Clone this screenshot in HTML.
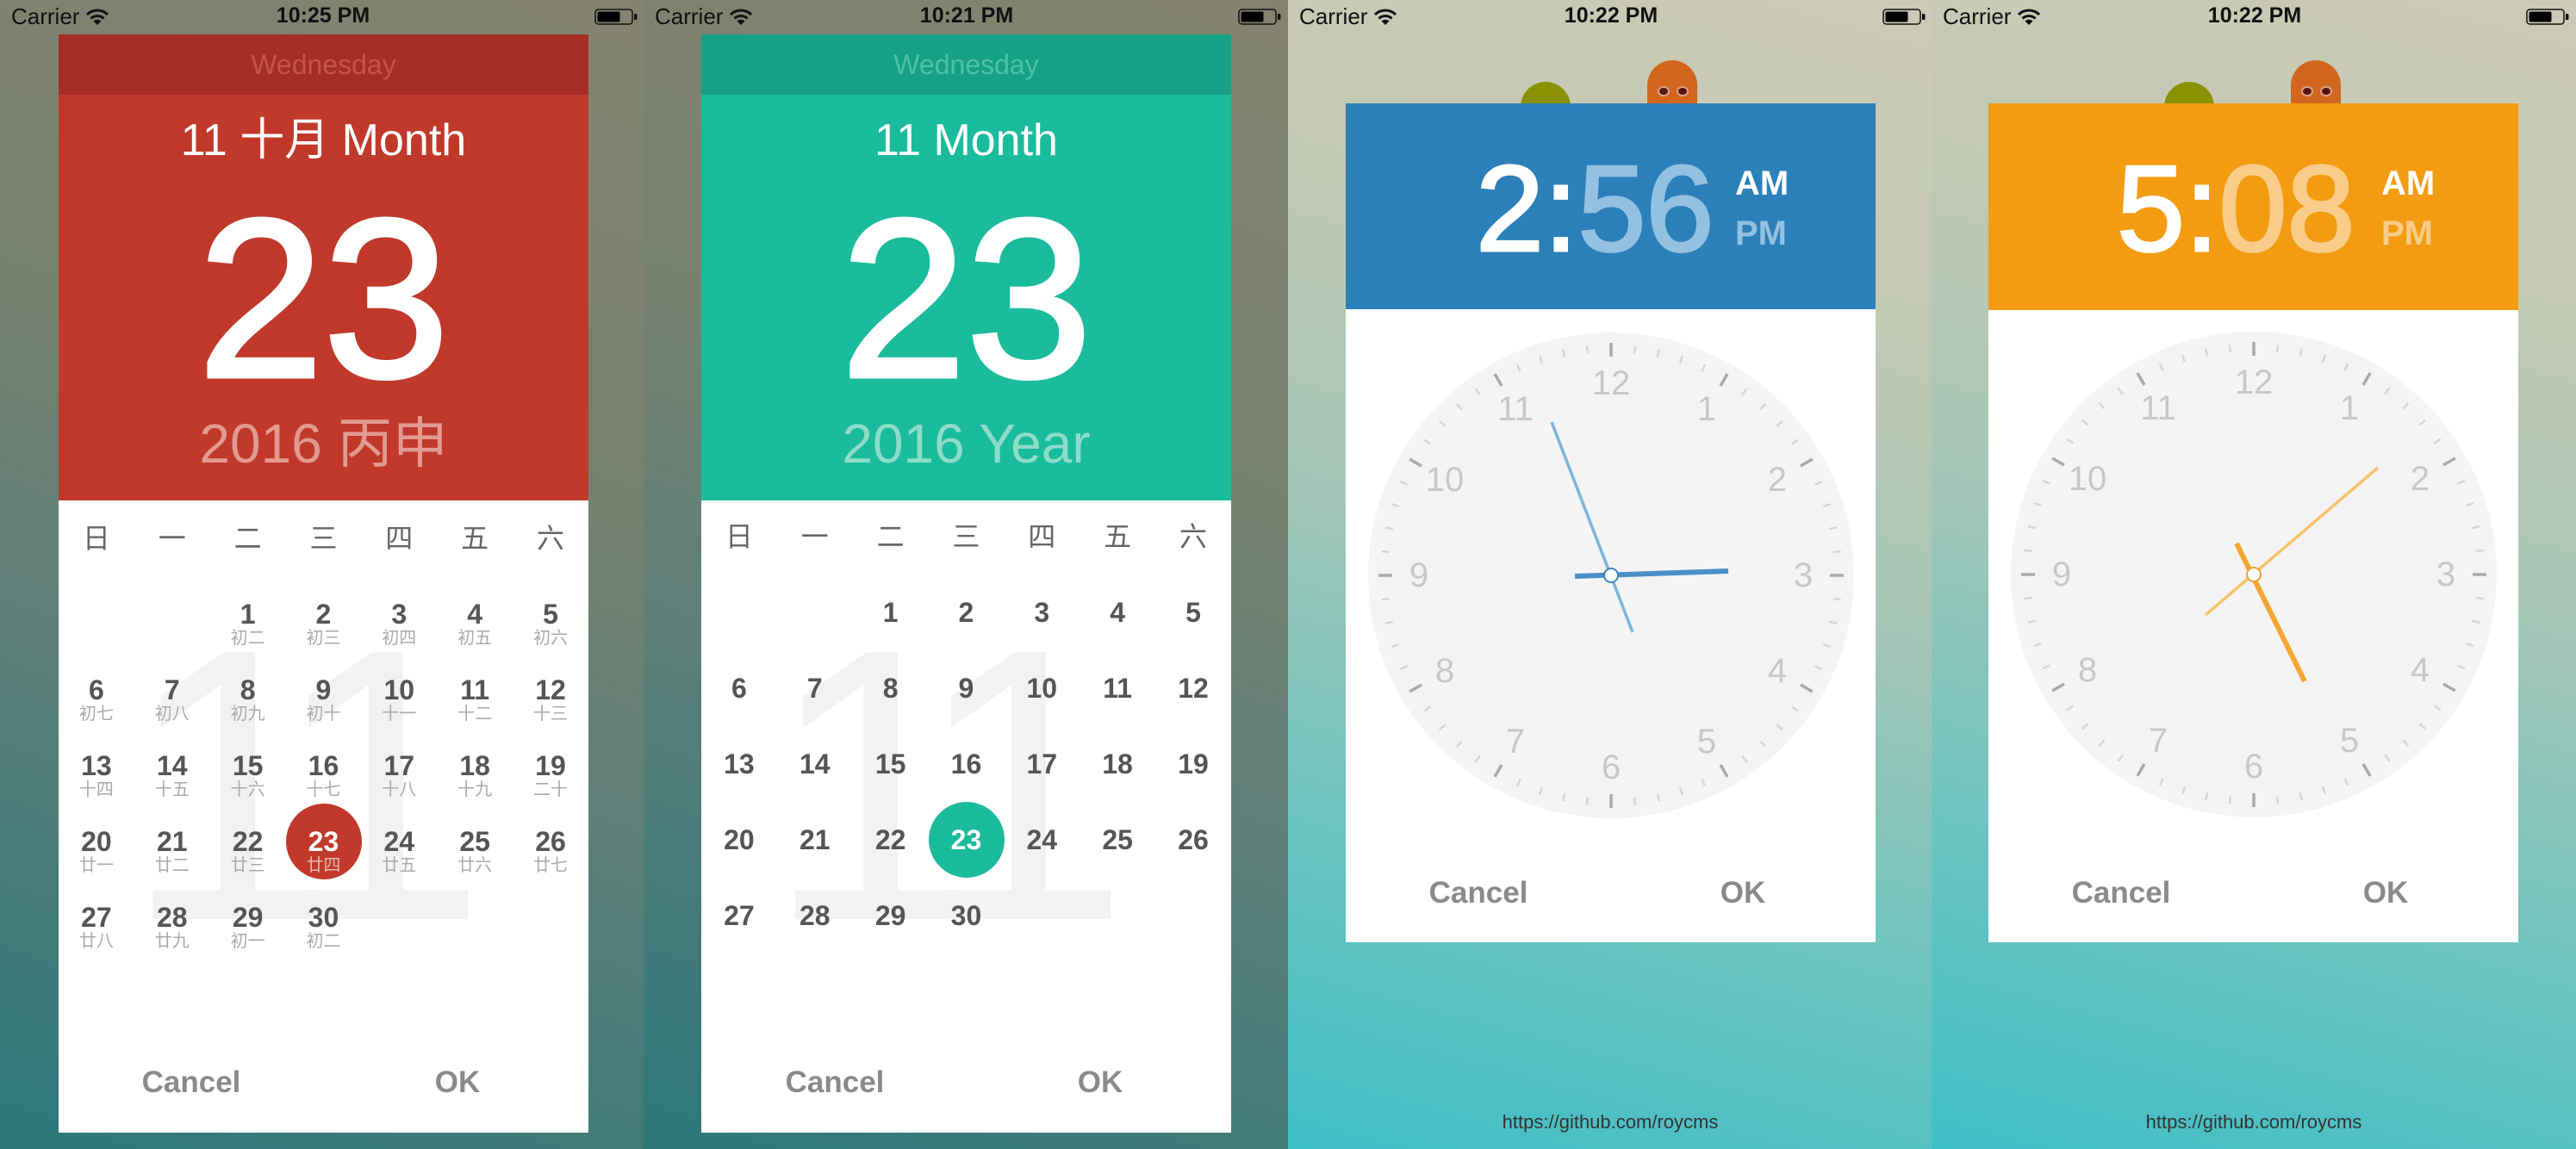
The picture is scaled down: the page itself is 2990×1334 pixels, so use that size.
<!DOCTYPE html>
<html><head><meta charset="utf-8">
<style>
*{margin:0;padding:0;box-sizing:border-box}
body{width:2990px;height:1334px;overflow:hidden;position:relative;font-family:"Liberation Sans","Noto Sans CJK SC",sans-serif;background:#777}
.p{position:absolute;top:0;width:748px;height:1334px;overflow:hidden}
.p1,.p2{background:linear-gradient(200deg,#84836f 0%,#77826f 35%,#5f7f78 60%,#2c787a 100%)}
.p3,.p4{background:linear-gradient(195deg,#cccab4 0%,#c2c9b3 25%,#a3c6b8 50%,#6cc4c0 75%,#3ebec6 100%)}
.st{position:absolute;top:0;left:0;width:748px;height:40px;font-size:26px;color:#111}
.st .car{position:absolute;left:13px;top:6px;line-height:1}
.st .tm{position:absolute;left:0;width:750px;text-align:center;top:6px;line-height:1;font-weight:bold;font-size:25px}
.st svg{position:absolute}
.card{position:absolute;left:68px;width:615px;background:#fff;overflow:hidden}
.wd{position:absolute;left:0;width:615px;top:0;height:70px;text-align:center;font-size:32px;line-height:70px}
.hd{position:absolute;left:0;width:615px;top:70px;height:471px}
.ab{position:absolute;left:0;width:615px;text-align:center;line-height:1;white-space:nowrap}
.big{-webkit-text-stroke:5px #fff}
.grid{position:absolute;left:0;top:541px;width:615px;display:grid;grid-template-columns:repeat(7,87.857px);grid-auto-rows:88px}
.grid div{position:relative;text-align:center;line-height:88px;font-size:32px;font-weight:bold;color:#555}
.grid div.w{font-weight:normal;font-size:32px;color:#666}
.grid div i{position:absolute;left:0;right:0;top:60px;line-height:24px;font-size:20px;font-style:normal;font-weight:normal;color:#aaa}
.wm{position:absolute;left:75px;top:647px;font-size:450px;line-height:1;color:#f2f2f2;letter-spacing:-45px}
.btn{position:absolute;font-size:35px;font-weight:bold;color:#8a8a8a;line-height:1;width:200px;text-align:center}
.url{position:absolute;left:0;width:748px;text-align:center;font-size:22px;color:#333;top:1290px}
.eye{position:absolute;top:102px;width:10px;height:8px;border-radius:50%;background:#5a1410;box-shadow:0 0 0 2px #d9a58a}
</style></head><body>

<svg width="0" height="0" style="position:absolute">
<defs>
<g id="wifi"><path d="M1 7 A17 17 0 0 1 25 7" fill="none" stroke="#111" stroke-width="3"/><path d="M5.5 11.5 A11 11 0 0 1 20.5 11.5" fill="none" stroke="#111" stroke-width="3"/><path d="M13 19 L8.5 14.5 A6.5 6.5 0 0 1 17.5 14.5 Z" fill="#111"/></g>
<g id="bat"><rect x="1" y="1" width="43" height="17" rx="3.5" fill="none" stroke="#111" stroke-width="1.5"/><rect x="3.5" y="3.5" width="26" height="12" rx="1.5" fill="#000"/><path d="M46 6 h2 a1.5 1.5 0 0 1 1.5 1.5 v4 a1.5 1.5 0 0 1 -1.5 1.5 h-2z" fill="#111"/></g>
<g id="ticks">
<g stroke="#d6d6d6" stroke-width="2.5">
<line x1="0" y1="-268" x2="0" y2="-259" transform="rotate(6)"/><line x1="0" y1="-268" x2="0" y2="-259" transform="rotate(12)"/><line x1="0" y1="-268" x2="0" y2="-259" transform="rotate(18)"/><line x1="0" y1="-268" x2="0" y2="-259" transform="rotate(24)"/>
<line x1="0" y1="-268" x2="0" y2="-259" transform="rotate(36)"/><line x1="0" y1="-268" x2="0" y2="-259" transform="rotate(42)"/><line x1="0" y1="-268" x2="0" y2="-259" transform="rotate(48)"/><line x1="0" y1="-268" x2="0" y2="-259" transform="rotate(54)"/>
<line x1="0" y1="-268" x2="0" y2="-259" transform="rotate(66)"/><line x1="0" y1="-268" x2="0" y2="-259" transform="rotate(72)"/><line x1="0" y1="-268" x2="0" y2="-259" transform="rotate(78)"/><line x1="0" y1="-268" x2="0" y2="-259" transform="rotate(84)"/>
<line x1="0" y1="-268" x2="0" y2="-259" transform="rotate(96)"/><line x1="0" y1="-268" x2="0" y2="-259" transform="rotate(102)"/><line x1="0" y1="-268" x2="0" y2="-259" transform="rotate(108)"/><line x1="0" y1="-268" x2="0" y2="-259" transform="rotate(114)"/>
<line x1="0" y1="-268" x2="0" y2="-259" transform="rotate(126)"/><line x1="0" y1="-268" x2="0" y2="-259" transform="rotate(132)"/><line x1="0" y1="-268" x2="0" y2="-259" transform="rotate(138)"/><line x1="0" y1="-268" x2="0" y2="-259" transform="rotate(144)"/>
<line x1="0" y1="-268" x2="0" y2="-259" transform="rotate(156)"/><line x1="0" y1="-268" x2="0" y2="-259" transform="rotate(162)"/><line x1="0" y1="-268" x2="0" y2="-259" transform="rotate(168)"/><line x1="0" y1="-268" x2="0" y2="-259" transform="rotate(174)"/>
<line x1="0" y1="-268" x2="0" y2="-259" transform="rotate(186)"/><line x1="0" y1="-268" x2="0" y2="-259" transform="rotate(192)"/><line x1="0" y1="-268" x2="0" y2="-259" transform="rotate(198)"/><line x1="0" y1="-268" x2="0" y2="-259" transform="rotate(204)"/>
<line x1="0" y1="-268" x2="0" y2="-259" transform="rotate(216)"/><line x1="0" y1="-268" x2="0" y2="-259" transform="rotate(222)"/><line x1="0" y1="-268" x2="0" y2="-259" transform="rotate(228)"/><line x1="0" y1="-268" x2="0" y2="-259" transform="rotate(234)"/>
<line x1="0" y1="-268" x2="0" y2="-259" transform="rotate(246)"/><line x1="0" y1="-268" x2="0" y2="-259" transform="rotate(252)"/><line x1="0" y1="-268" x2="0" y2="-259" transform="rotate(258)"/><line x1="0" y1="-268" x2="0" y2="-259" transform="rotate(264)"/>
<line x1="0" y1="-268" x2="0" y2="-259" transform="rotate(276)"/><line x1="0" y1="-268" x2="0" y2="-259" transform="rotate(282)"/><line x1="0" y1="-268" x2="0" y2="-259" transform="rotate(288)"/><line x1="0" y1="-268" x2="0" y2="-259" transform="rotate(294)"/>
<line x1="0" y1="-268" x2="0" y2="-259" transform="rotate(306)"/><line x1="0" y1="-268" x2="0" y2="-259" transform="rotate(312)"/><line x1="0" y1="-268" x2="0" y2="-259" transform="rotate(318)"/><line x1="0" y1="-268" x2="0" y2="-259" transform="rotate(324)"/>
<line x1="0" y1="-268" x2="0" y2="-259" transform="rotate(336)"/><line x1="0" y1="-268" x2="0" y2="-259" transform="rotate(342)"/><line x1="0" y1="-268" x2="0" y2="-259" transform="rotate(348)"/><line x1="0" y1="-268" x2="0" y2="-259" transform="rotate(354)"/>
</g>
<g stroke="#aaaaaa" stroke-width="3.5">
<line x1="0" y1="-270" x2="0" y2="-254"/><line x1="0" y1="-270" x2="0" y2="-254" transform="rotate(30)"/><line x1="0" y1="-270" x2="0" y2="-254" transform="rotate(60)"/><line x1="0" y1="-270" x2="0" y2="-254" transform="rotate(90)"/><line x1="0" y1="-270" x2="0" y2="-254" transform="rotate(120)"/><line x1="0" y1="-270" x2="0" y2="-254" transform="rotate(150)"/><line x1="0" y1="-270" x2="0" y2="-254" transform="rotate(180)"/><line x1="0" y1="-270" x2="0" y2="-254" transform="rotate(210)"/><line x1="0" y1="-270" x2="0" y2="-254" transform="rotate(240)"/><line x1="0" y1="-270" x2="0" y2="-254" transform="rotate(270)"/><line x1="0" y1="-270" x2="0" y2="-254" transform="rotate(300)"/><line x1="0" y1="-270" x2="0" y2="-254" transform="rotate(330)"/>
</g>
</g>
</defs></svg>

<!-- PANEL 1 -->
<div class="p p1" style="left:0">
  <div class="st"><span class="car">Carrier</span><svg style="left:100px;top:10px" width="26" height="20"><use href="#wifi"/></svg><span class="tm">10:25 PM</span><svg style="left:690px;top:10px" width="52" height="20"><use href="#bat"/></svg></div>
  <div class="card" style="top:40px;height:1275px">
    <div class="wd" style="background:#a62e26;color:#c5554b">Wednesday</div>
    <div class="hd" style="background:#c0392b"></div>
    <div class="ab" style="top:97px;font-size:52px;color:#fff">11 十月 Month</div>
    <div class="ab big" style="top:176px;font-size:262px;color:#fff">23</div>
    <div class="ab" style="top:443px;font-size:64px;color:#e29a91">2016 丙申</div>
    <div class="wm">11</div>
    <div class="grid">
      <div class="w">日</div><div class="w">一</div><div class="w">二</div><div class="w">三</div><div class="w">四</div><div class="w">五</div><div class="w">六</div>
      <div></div><div></div><div>1<i>初二</i></div><div>2<i>初三</i></div><div>3<i>初四</i></div><div>4<i>初五</i></div><div>5<i>初六</i></div>
      <div>6<i>初七</i></div><div>7<i>初八</i></div><div>8<i>初九</i></div><div>9<i>初十</i></div><div>10<i>十一</i></div><div>11<i>十二</i></div><div>12<i>十三</i></div>
      <div>13<i>十四</i></div><div>14<i>十五</i></div><div>15<i>十六</i></div><div>16<i>十七</i></div><div>17<i>十八</i></div><div>18<i>十九</i></div><div>19<i>二十</i></div>
      <div>20<i>廿一</i></div><div>21<i>廿二</i></div><div>22<i>廿三</i></div><div style="color:#fff"><span style="position:absolute;left:0;top:0;width:88px;height:88px;border-radius:50%;background:#c0392b"></span><span style="position:relative">23</span><i style="color:#e8b5b0">廿四</i></div><div>24<i>廿五</i></div><div>25<i>廿六</i></div><div>26<i>廿七</i></div>
      <div>27<i>廿八</i></div><div>28<i>廿九</i></div><div>29<i>初一</i></div><div>30<i>初二</i></div>
    </div>
    <div class="btn" style="left:54px;top:1199px">Cancel</div>
    <div class="btn" style="left:363px;top:1199px">OK</div>
  </div>
</div>

<!-- PANEL 2 -->
<div class="p p2" style="left:747px">
  <div class="st"><span class="car">Carrier</span><svg style="left:100px;top:10px" width="26" height="20"><use href="#wifi"/></svg><span class="tm">10:21 PM</span><svg style="left:690px;top:10px" width="52" height="20"><use href="#bat"/></svg></div>
  <div class="card" style="top:40px;height:1275px;left:67px">
    <div class="wd" style="background:#16a085;color:#4cc3a6">Wednesday</div>
    <div class="hd" style="background:#1abc9c"></div>
    <div class="ab" style="top:97px;font-size:52px;color:#fff">11 Month</div>
    <div class="ab big" style="top:176px;font-size:262px;color:#fff">23</div>
    <div class="ab" style="top:443px;font-size:64px;color:#8ddcc8">2016 Year</div>
    <div class="wm">11</div>
    <div class="grid" style="top:539px">
      <div class="w">日</div><div class="w">一</div><div class="w">二</div><div class="w">三</div><div class="w">四</div><div class="w">五</div><div class="w">六</div>
      <div></div><div></div><div>1</div><div>2</div><div>3</div><div>4</div><div>5</div>
      <div>6</div><div>7</div><div>8</div><div>9</div><div>10</div><div>11</div><div>12</div>
      <div>13</div><div>14</div><div>15</div><div>16</div><div>17</div><div>18</div><div>19</div>
      <div>20</div><div>21</div><div>22</div><div style="color:#fff"><span style="position:absolute;left:0;top:0;width:88px;height:88px;border-radius:50%;background:#1abc9c"></span><span style="position:relative">23</span></div><div>24</div><div>25</div><div>26</div>
      <div>27</div><div>28</div><div>29</div><div>30</div>
    </div>
    <div class="btn" style="left:55px;top:1199px">Cancel</div>
    <div class="btn" style="left:363px;top:1199px">OK</div>
  </div>
</div>

<!-- PANEL 3 -->
<div class="p p3" style="left:1495px">
  <div class="st"><span class="car">Carrier</span><svg style="left:100px;top:10px" width="26" height="20"><use href="#wifi"/></svg><span class="tm">10:22 PM</span><svg style="left:690px;top:10px" width="52" height="20"><use href="#bat"/></svg></div>
  <div style="position:absolute;left:270px;top:95px;width:58px;height:58px;border-radius:50%;background:#8a9102"></div>
  <div style="position:absolute;left:417px;top:70px;width:58px;height:80px;border-radius:29px 29px 0 0;background:#d2661f"></div>
  <div class="eye" style="left:431px"></div><div class="eye" style="left:453px"></div>
  <div class="card" style="top:120px;height:974px;left:67px">
    <div style="position:absolute;left:0;top:0;width:615px;height:239px;background:#2b80b9"></div>
    <div style="position:absolute;left:151px;top:52px;font-size:142px;line-height:1;color:#fff;white-space:nowrap;-webkit-text-stroke:3px #fff">2:<span style="color:#94c0e1;-webkit-text-stroke:3px #94c0e1">56</span></div>
    <div style="position:absolute;left:452px;top:73px;font-size:40px;font-weight:bold;line-height:1;color:#fff">AM</div>
    <div style="position:absolute;left:452px;top:131px;font-size:40px;font-weight:bold;line-height:1;color:#94c0e1">PM</div>
    <svg style="position:absolute;left:0;top:0" width="615" height="974">
      <g transform="translate(308,548)">
        <circle r="282" fill="#f4f4f4"/>
        <use href="#ticks"/>
        <g font-family="Liberation Sans" font-size="40" fill="#c8c8c8" text-anchor="middle" dominant-baseline="central">
          <text x="111" y="-193">1</text><text x="193" y="-111">2</text><text x="223" y="0">3</text><text x="193" y="111">4</text><text x="111" y="193">5</text><text x="0" y="223">6</text><text x="-111" y="193">7</text><text x="-193" y="111">8</text><text x="-223" y="0">9</text><text x="-193" y="-111">10</text><text x="-111" y="-193">11</text><text x="0" y="-223">12</text>
        </g>
        <line x1="25" y1="66" x2="-69" y2="-178" stroke="#7db4dc" stroke-width="3.5"/>
        <line x1="-42" y1="1" x2="136" y2="-5" stroke="#4a8fc8" stroke-width="6"/>
        <circle r="8" fill="#fff" stroke="#3a84c0" stroke-width="2"/>
      </g>
    </svg>
    <div class="btn" style="left:54px;top:899px">Cancel</div>
    <div class="btn" style="left:361px;top:899px">OK</div>
  </div>
  <div class="url">https://github.com/roycms</div>
</div>

<!-- PANEL 4 -->
<div class="p p4" style="left:2242px">
  <div class="st"><span class="car">Carrier</span><svg style="left:100px;top:10px" width="26" height="20"><use href="#wifi"/></svg><span class="tm">10:22 PM</span><svg style="left:690px;top:10px" width="52" height="20"><use href="#bat"/></svg></div>
  <div style="position:absolute;left:270px;top:95px;width:58px;height:58px;border-radius:50%;background:#8a9102"></div>
  <div style="position:absolute;left:417px;top:70px;width:58px;height:80px;border-radius:29px 29px 0 0;background:#d2661f"></div>
  <div class="eye" style="left:431px"></div><div class="eye" style="left:453px"></div>
  <div class="card" style="top:120px;height:974px;left:66px">
    <div style="position:absolute;left:0;top:0;width:615px;height:240px;background:#f39c12"></div>
    <div style="position:absolute;left:149px;top:52px;font-size:142px;line-height:1;color:#fff;white-space:nowrap;-webkit-text-stroke:3px #fff">5:<span style="color:#f9cd89;-webkit-text-stroke:3px #f9cd89">08</span></div>
    <div style="position:absolute;left:456px;top:73px;font-size:40px;font-weight:bold;line-height:1;color:#fff">AM</div>
    <div style="position:absolute;left:456px;top:131px;font-size:40px;font-weight:bold;line-height:1;color:#f9cd89">PM</div>
    <svg style="position:absolute;left:0;top:0" width="615" height="974">
      <g transform="translate(308,547)">
        <circle r="282" fill="#f4f4f4"/>
        <use href="#ticks"/>
        <g font-family="Liberation Sans" font-size="40" fill="#c8c8c8" text-anchor="middle" dominant-baseline="central">
          <text x="111" y="-193">1</text><text x="193" y="-111">2</text><text x="223" y="0">3</text><text x="193" y="111">4</text><text x="111" y="193">5</text><text x="0" y="223">6</text><text x="-111" y="193">7</text><text x="-193" y="111">8</text><text x="-223" y="0">9</text><text x="-193" y="-111">10</text><text x="-111" y="-193">11</text><text x="0" y="-223">12</text>
        </g>
        <line x1="-56" y1="47" x2="144" y2="-124" stroke="#f7c46c" stroke-width="3.5"/>
        <line x1="-20" y1="-36" x2="59" y2="124" stroke="#f4a630" stroke-width="6"/>
        <circle r="8" fill="#fff" stroke="#f0a030" stroke-width="2"/>
      </g>
    </svg>
    <div class="btn" style="left:54px;top:899px">Cancel</div>
    <div class="btn" style="left:361px;top:899px">OK</div>
  </div>
  <div class="url">https://github.com/roycms</div>
</div>

</body></html>
